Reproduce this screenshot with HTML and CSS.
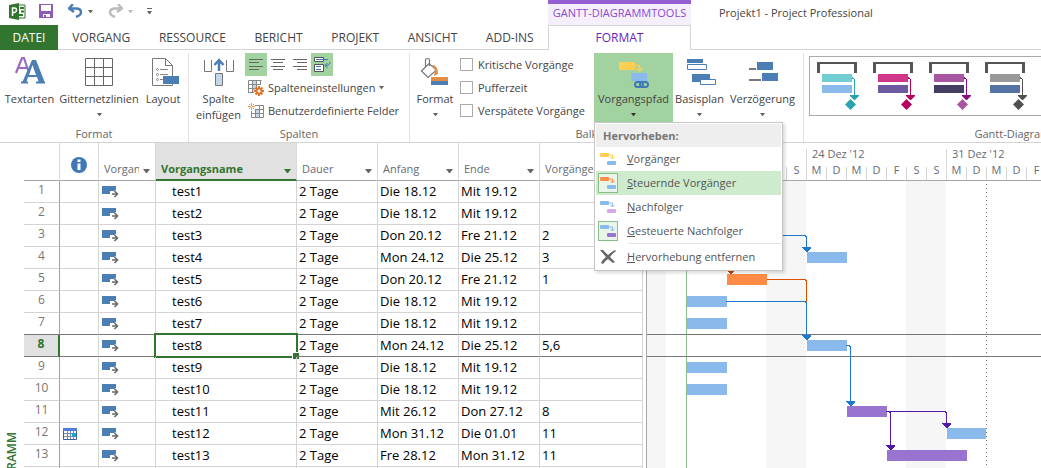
FILE: index.html
```html
<!DOCTYPE html>
<html lang="de">
<head>
<meta charset="utf-8">
<title>Projekt1 - Project Professional</title>
<link rel="stylesheet" href="styles.css">
</head>
<body>
<svg class="defs" aria-hidden="true">
  <symbol id="task-mode" viewBox="0 0 17 12">
    <path d="M0 0H14V5H8V8H0Z" fill="#4a7eb5"/>
    <path d="M10 8H15M12.500 5L15.500 8L12.500 11" fill="none" stroke="#fff" stroke-width="3"/>
    <path d="M10 8H15M12.500 5L15.500 8L12.500 11" fill="none" stroke="#6a6a6a" stroke-width="1.600"/>
  </symbol>
  <symbol id="caret" viewBox="0 0 7 4"><path d="M0 0H7L4 4H3Z"/></symbol>
</svg>

<header class="window-head">
  <div class="quick-access">
    <svg class="app-logo" width="17" height="17" viewBox="0 0 17 17">
      <path d="M9 2H16V15H9Z" fill="#fff" stroke="#31752f"/>
      <path d="M11 5H15M12 8.500H15M10 12H14" stroke="#31752f" stroke-width="2"/>
      <path d="M0 2L10 0V17L0 15Z" fill="#31752f"/>
      <path d="M3.500 13V5H5.500Q7.500 5 7.500 7T5.500 9.500H3.500" fill="none" stroke="#fff" stroke-width="1.500"/>
    </svg>
    <button class="tool save" aria-label="Speichern"><svg width="14" height="14" viewBox="0 0 14 14"><path d="M0 0H14V14H0Z" fill="#8e5bb8"/><path d="M2 1H12V7H2ZM4 10H11V13H7V11H5V13H4Z" fill="#fff"/></svg></button>
    <button class="tool undo" aria-label="Rückgängig"><svg width="15" height="14" viewBox="0 0 15 14"><path d="M5 0L1 4.500L6 8M2 4.500H8Q13 4.500 13 8.500Q13 11 8 13" fill="none" stroke="#4a7eb5" stroke-width="2.500"/></svg><svg class="caret" width="5" height="3"><use href="#caret"/></svg></button>
    <button class="tool redo" aria-label="Wiederholen"><svg width="15" height="14" viewBox="0 0 15 14"><path d="M10 0L14 4.500L9 8M13 4.500H7Q2 4.500 2 8.500Q2 11 7 13" fill="none" stroke="#bcbcbc" stroke-width="2.500"/></svg><svg class="caret" width="5" height="3"><use href="#caret"/></svg></button>
    <button class="tool" aria-label="Anpassen"><svg width="5" height="6" viewBox="0 0 5 6"><path d="M0 0H5V1H0ZM0 3H5L3 6H2Z" fill="#666"/></svg></button>
  </div>
  <div class="context-title">GANTT-DIAGRAMMTOOLS</div>
  <div class="window-title">Projekt1 - Project Professional</div>
  <nav class="tabs">
    <button class="tab file">DATEI</button>
    <button class="tab">VORGANG</button>
    <button class="tab">RESSOURCE</button>
    <button class="tab">BERICHT</button>
    <button class="tab">PROJEKT</button>
    <button class="tab">ANSICHT</button>
    <button class="tab">ADD-INS</button>
  </nav>
  <button class="tab format">FORMAT</button>
  <div class="tab-rest"></div>
</header>

<section class="ribbon">
  <div class="group g-format">
    <div class="tools">
      <button class="big w-text"><svg width="32" height="32" viewBox="0 0 32 32"><path d="M2 17L8 2H10L15 17M4 12H13" fill="none" stroke="#9b6bbf" stroke-width="2.200"/><path d="M19 4H22L31 27H25L23 21H14L12 27H8L18 4ZM15 19H22L18.500 9Z" fill="#4a7eb5"/><path d="M7 26.500H14M22 26.500H31" stroke="#4a7eb5" stroke-width="2"/></svg><span>Textarten</span></button>
      <button class="big w-grid"><svg width="32" height="32" viewBox="0 0 32 32"><path d="M2.500 2.500H29.500V29.500H2.500ZM11.500 2V30M20.500 2V30M2 11.500H30M2 20.500H30" fill="none" stroke="#666"/></svg><span>Gitternetzlinien</span><svg class="caret" width="5" height="3"><use href="#caret"/></svg></button>
      <button class="big w-layout"><svg width="32" height="32" viewBox="0 0 32 32"><path d="M5.500 2.500H18.500L25.500 9.500V29.500H5.500ZM18.500 2.500V9.500H25.500" fill="#fff" stroke="#777"/><path d="M13 13.500H21M13 18.500H21M13 23.500H16" stroke="#888"/><g fill="#fff" stroke="#888"><circle cx="10.500" cy="13.500" r="1"/><circle cx="10.500" cy="18.500" r="1"/><circle cx="10.500" cy="23.500" r="1"/></g><path d="M16 20H32V28H16Z" fill="#4a7eb5"/></svg><span>Layout</span></button>
    </div>
    <div class="label">Format</div>
  </div>

  <div class="group g-columns">
    <div class="tools">
      <button class="big w-insert"><svg width="32" height="32" viewBox="0 0 32 32"><path d="M1.500 4V15.500H8.500V4M23.500 4V15.500H30.500V4" fill="none" stroke="#777"/><path d="M12.500 17.500H19.500V29.500H12.500Z" fill="#c3d6ea" stroke="#777"/><path d="M16 15V5M11.500 9L16 4L20.500 9" fill="none" stroke="#4a7eb5" stroke-width="2.500"/></svg><span>Spalte<br>einfügen</span></button>
      <div class="stack">
        <div class="aligns">
          <button class="align on" aria-label="Linksbündig"><svg width="14" height="11"><path d="M0 .5H14M0 3.500H10M0 7.500H14M0 10.500H10" stroke="#666"/></svg></button>
          <button class="align" aria-label="Zentriert"><svg width="14" height="11"><path d="M0 .5H14M2 3.500H12M0 7.500H14M2 10.500H12" stroke="#666"/></svg></button>
          <button class="align" aria-label="Rechtsbündig"><svg width="14" height="11"><path d="M0 .5H14M4 3.500H14M0 7.500H14M4 10.500H14" stroke="#666"/></svg></button>
          <button class="align on" aria-label="Text umbrechen"><svg width="17" height="17" viewBox="0 0 17 17"><path d="M.5 1.500H9.500V5.500H.5ZM.5 8.500H9.500V15.500H.5Z" fill="#fff" stroke="#555"/><path d="M2 3.500H14M2 10.500H7M2 13.500H7M16 6Q16 9.500 11 9.500M13.500 7L11 9.500L13.500 12" fill="none" stroke="#3d74b2"/></svg></button>
        </div>
        <button class="row-tool"><svg width="16" height="16" viewBox="0 0 16 16"><path d="M4 1H8V12H4Z" fill="#c3d6ea"/><path d="M.5 .5H13.500M.5 4.500H13M.5 8.500H8M.5 12.500H6M.5 .5V13M4.500 .5V13M8.500 .5V8M12.500 .5V5" fill="none" stroke="#888"/><circle cx="11" cy="11" r="2.500" fill="none" stroke="#e07628" stroke-width="2"/><path d="M11 6V8M11 14V16M6 11H8M14 11H16M7.500 7.500L9 9M13 13L14.500 14.500M14.500 7.500L13 9M7.500 14.500L9 13" stroke="#e07628" stroke-width="2"/></svg><span>Spalteneinstellungen</span><svg class="caret" width="5" height="3"><use href="#caret"/></svg></button>
        <button class="row-tool"><svg width="16" height="16" viewBox="0 0 16 16"><path d="M7 7H11V14H7Z" fill="#c3d6ea"/><path d="M7 2.500H15.500V14.500H3.500V8M7 6.500H15M4 10.500H15M7.500 7V14M11.500 2V14" fill="none" stroke="#888"/><path d="M3.500 0V2M3.500 5V7M0 3.500H2M5 3.500H7M1 1L2 2M5 5L6 6M6 1L5 2M2 5L1 6" stroke="#e8954a"/><circle cx="3.500" cy="3.500" r="1" fill="none" stroke="#e8954a"/></svg><span>Benutzerdefinierte Felder</span></button>
      </div>
    </div>
    <div class="label">Spalten</div>
  </div>

  <div class="group g-bars">
    <div class="tools">
      <button class="big w-fmt"><svg width="32" height="32" viewBox="0 0 32 32"><path d="M2.500 15L10 7.500L17.500 14L9 21.500ZM6.500 11V4Q6.500 2.500 8.500 2.500T10.500 4V10" fill="none" stroke="#777" stroke-width="1.200"/><path d="M13 9Q19 9 19 18L15 20L16 14Z" fill="#e58e46"/><path d="M12 21H29V25H12Z" fill="#e58e46"/><path d="M12 25H29V29H12Z" fill="#4a7eb5"/></svg><span>Format</span><svg class="caret" width="5" height="3"><use href="#caret"/></svg></button>
      <div class="checks">
        <label class="check"><input type="checkbox">Kritische Vorgänge</label>
        <label class="check"><input type="checkbox">Pufferzeit</label>
        <label class="check"><input type="checkbox">Verspätete Vorgänge</label>
      </div>
      <div class="dropdown">
        <button class="big w-path" aria-expanded="true"><svg width="32" height="32" viewBox="0 0 32 32"><path d="M1 6H17V14H1Z" fill="#ffcf54"/><path d="M17 9.500H21.500V13M18.500 12L21.500 15L24.500 12" fill="none" stroke="#ffcf54" stroke-width="1.500"/><path d="M13 17H29V25H13Z" fill="#8abaec"/><g fill="none" stroke="#4079b5" stroke-width="2"><rect x="17" y="26" width="8" height="5" rx="2.500"/><rect x="22" y="26" width="8" height="5" rx="2.500"/></g></svg><span>Vorgangspfad</span><svg class="caret" width="5" height="3"><use href="#caret"/></svg></button>
        <div class="menu" role="menu">
          <div class="menu-title">Hervorheben:</div>
          <button class="item" role="menuitem"><span class="mark"><svg width="16" height="12" viewBox="0 0 16 12"><rect width="9" height="4" rx="1" fill="#ffcf54"/><path d="M9 2H12.500V5M10.500 4L12.500 6L14.500 4" fill="none" stroke="#ffcf54"/><rect x="7" y="8" width="9" height="4" rx="1" fill="#8abaec"/></svg></span><span><u>V</u>orgänger</span></button>
          <button class="item hover" role="menuitem"><span class="mark set"><svg width="16" height="12" viewBox="0 0 16 12"><rect width="9" height="4" rx="1" fill="#ff8c46"/><path d="M9 2H12.500V5M10.500 4L12.500 6L14.500 4" fill="none" stroke="#ff8c46"/><rect x="7" y="8" width="9" height="4" rx="1" fill="#8abaec"/></svg></span><span><u>S</u>teuernde Vorgänger</span></button>
          <button class="item" role="menuitem"><span class="mark"><svg width="16" height="12" viewBox="0 0 16 12"><rect width="9" height="4" rx="1" fill="#8abaec"/><path d="M9 2H12.500V5M10.500 4L12.500 6L14.500 4" fill="none" stroke="#8abaec"/><rect x="7" y="8" width="9" height="4" rx="1" fill="#d8a8e8"/></svg></span><span><u>N</u>achfolger</span></button>
          <button class="item" role="menuitem"><span class="mark set"><svg width="16" height="12" viewBox="0 0 16 12"><rect width="9" height="4" rx="1" fill="#8abaec"/><path d="M9 2H12.500V5M10.500 4L12.500 6L14.500 4" fill="none" stroke="#8abaec"/><rect x="7" y="8" width="9" height="4" rx="1" fill="#9873d0"/></svg></span><span><u>G</u>esteuerte Nachfolger</span></button>
          <hr class="menu-rule">
          <button class="item" role="menuitem"><span class="mark"><svg width="16" height="14" viewBox="0 0 16 14"><path d="M0 0H3L8 5Q11 2 15 0L16 1Q12 4 10 7L15 12L13 13L8 9Q5 11 3 14L1 13Q3 9 6 7Z" fill="#666"/></svg></span><span><u>H</u>ervorhebung entfernen</span></button>
        </div>
      </div>
      <button class="big w-base"><svg width="32" height="32" viewBox="0 0 32 32"><path d="M3 3H19V7H3ZM8 18H26V26H8Z" fill="#4a7eb5"/><path d="M3.500 8.500H22.500V13.500H3.500ZM16.500 23.500H31.500V28.500H16.500Z" fill="#fff" stroke="#4a7eb5"/></svg><span>Basisplan</span><svg class="caret" width="5" height="3"><use href="#caret"/></svg></button>
      <button class="big w-delay"><svg width="32" height="32" viewBox="0 0 32 32"><path d="M10 6H26V14H10ZM15 17H31V25H15Z" fill="#4a7eb5"/><path d="M2 13H9M2 24H14" stroke="#777" stroke-width="2"/></svg><span>Verzögerung</span><svg class="caret" width="5" height="3"><use href="#caret"/></svg></button>
    </div>
    <div class="label">Balkenarten</div>
  </div>

  <div class="group g-gallery">
    <div class="gallery-inner">
      <div class="gallery">
        <button class="style s1" aria-label="Format 1"><svg width="56" height="58" viewBox="0 0 56 58"><path class="frame" d="M7 5H47V16H44V7H10V16H7Z"/><path class="top" d="M12 17H42V25H12Z"/><path class="bot" d="M12 28H42V36H12Z"/><path class="link" d="M42 20H43V21H44V22H45V38H49V39L45 43H44L40 39V38H44V22H42Z"/><path class="gem" d="M40.500 42L46 47.500L40.500 53L35 47.500Z"/></svg></button>
        <button class="style s2" aria-label="Format 2"><svg width="56" height="58" viewBox="0 0 56 58"><path class="frame" d="M7 5H47V16H44V7H10V16H7Z"/><path class="top" d="M12 17H42V25H12Z"/><path class="bot" d="M12 28H42V36H12Z"/><path class="link" d="M42 20H43V21H44V22H45V38H49V39L45 43H44L40 39V38H44V22H42Z"/><path class="gem" d="M40.500 42L46 47.500L40.500 53L35 47.500Z"/></svg></button>
        <button class="style s3" aria-label="Format 3"><svg width="56" height="58" viewBox="0 0 56 58"><path class="frame" d="M7 5H47V16H44V7H10V16H7Z"/><path class="top" d="M12 17H42V25H12Z"/><path class="bot" d="M12 28H42V36H12Z"/><path class="link" d="M42 20H43V21H44V22H45V38H49V39L45 43H44L40 39V38H44V22H42Z"/><path class="gem" d="M40.500 42L46 47.500L40.500 53L35 47.500Z"/></svg></button>
        <button class="style s4" aria-label="Format 4"><svg width="56" height="58" viewBox="0 0 56 58"><path class="frame" d="M7 5H47V16H44V7H10V16H7Z"/><path class="top" d="M12 17H42V25H12Z"/><path class="bot" d="M12 28H42V36H12Z"/><path class="link" d="M42 20H43V21H44V22H45V38H49V39L45 43H44L40 39V38H44V22H42Z"/><path class="gem" d="M40.500 42L46 47.500L40.500 53L35 47.500Z"/></svg></button>
      </div>
      <div class="label">Gantt-Diagrammformat</div>
    </div>
  </div>
</section>

<main class="workspace">
  <aside class="view-name"><span>GANTT-DIAGRAMM</span></aside>
  <table class="sheet">
    <colgroup><col class="c-num"><col class="c-info"><col class="c-mode"><col class="c-name"><col class="c-date"><col class="c-date"><col class="c-date"><col class="c-pred"></colgroup>
    <thead>
      <tr>
        <th class="num"></th>
        <th class="info"><svg width="16" height="16" viewBox="0 0 16 16"><circle cx="8" cy="8" r="8" fill="#3f78b5"/><path d="M8 2.500V5M8 6.500V13" stroke="#fff" stroke-width="3"/></svg></th>
        <th><div class="head"><span>Vorgangsmodus</span><svg class="caret" width="7" height="4"><use href="#caret"/></svg></div></th>
        <th class="picked"><div class="head"><span>Vorgangsname</span><svg class="caret" width="7" height="4"><use href="#caret"/></svg></div></th>
        <th><div class="head"><span>Dauer</span><svg class="caret" width="7" height="4"><use href="#caret"/></svg></div></th>
        <th><div class="head"><span>Anfang</span><svg class="caret" width="7" height="4"><use href="#caret"/></svg></div></th>
        <th><div class="head"><span>Ende</span><svg class="caret" width="7" height="4"><use href="#caret"/></svg></div></th>
        <th><div class="head"><span>Vorgänger</span><svg class="caret" width="7" height="4"><use href="#caret"/></svg></div></th>
      </tr>
    </thead>
    <tbody id="rows"></tbody>
  </table>
  <section class="chart">
    <div class="scale" id="scale"></div>
    <svg class="canvas" height="308" shape-rendering="crispEdges">
      <path d="M0 0H19V308H0ZM119 0H159V308H119ZM259 0H299V308H259Z" fill="#f6f6f6"/>
      <path d="M39.500 0V308" stroke="#8cc08c"/>
      <path d="M339.500 3V308" stroke="#777" stroke-dasharray="1 3"/>
      <path d="M0 153.500H2000M0 175.500H2000" stroke="#777"/>
      <g fill="#8abaec">
        <rect x="160" y="71" width="40" height="11"/>
        <rect x="40" y="115" width="40" height="11"/>
        <rect x="40" y="137" width="40" height="11"/>
        <rect x="160" y="159" width="40" height="11"/>
        <rect x="40" y="181" width="40" height="11"/>
        <rect x="40" y="203" width="40" height="11"/>
        <rect x="300" y="247" width="39" height="11"/>
      </g>
      <rect x="80" y="93" width="40" height="11" fill="#ff8c46"/>
      <g fill="#9873d0">
        <rect x="200" y="225" width="40" height="11"/>
        <rect x="240" y="269" width="80" height="11"/>
      </g>
      <g fill="none" stroke="#1f78d1">
        <path d="M80 54.500H158L159.500 56V67M79 120.500H158L159.500 122V155M199 164.500H202L203.500 166V221"/>
      </g>
      <path d="M120 98.500H158L159.500 100V121M83.500 60V89" fill="none" stroke="#e04f00"/>
      <path d="M239 230.500H298L299.500 232V243M242 230.500L243.500 232V265" fill="none" stroke="#5418a8"/>
      <path d="M155 66H164V67L160 71H159L155 67ZM155 154H164V155L160 159H159L155 155ZM199 220H208V221L204 225H203L199 221Z" fill="#1f78d1"/>
      <path d="M79 88H88V89L84 93H83L79 89Z" fill="#c84600"/>
      <path d="M295 242H304V243L300 247H299L295 243ZM239 264H248V265L244 269H243L239 265Z" fill="#5418a8"/>
    </svg>
  </section>
</main>
<script src="app.js"></script>
</body>
</html>
```

FILE: styles.css
```css
* { box-sizing: border-box; }

body {
  margin: 0;
  height: 100vh;
  overflow: hidden;
  display: flex;
  flex-direction: column;
  background: #fff;
  color: #444;
  font-family: "Open Sans", "Noto Sans", sans-serif;
  font-size: 11px;
  line-height: 16px;
}

button {
  margin: 0;
  padding: 0;
  border: 0;
  background: none;
  color: inherit;
  font: inherit;
  white-space: nowrap;
}

svg { display: block; flex: none; }
.defs { position: absolute; width: 0; height: 0; }
.caret { fill: #666; }

/* Title bar and tabs */
.window-head {
  flex: none;
  display: grid;
  grid-template-columns: 548px 143px 1fr;
  grid-template-rows: 25px 25px;
}
.quick-access { display: flex; align-items: center; padding: 0 0 3px 9px; }
.app-logo { margin-right: 13px; }
.tool { display: flex; align-items: center; gap: 5px; }
.save { margin-right: 15px; }
.undo { margin-right: 15px; }
.redo { margin-right: 14px; }
.redo .caret { fill: #bcbcbc; }
.context-title {
  border-top: 4px solid #9560d3;
  background: #f5effc;
  color: #8a4bd0;
  text-align: center;
  line-height: 18px;
  white-space: nowrap;
}
.window-title { padding: 5px 0 0 28px; white-space: nowrap; }
.tabs { display: flex; border-bottom: 1px solid #d4d4d4; }
.tab { flex: 1 1 auto; height: 25px; font-size: 12px; text-align: center; }
.file { flex: 0 0 58px; background: #31752f; color: #fff; }
.format { border: 1px solid #d4d4d4; border-bottom: 0; color: #6a1fb8; }
.tab-rest { border-bottom: 1px solid #d4d4d4; }

/* Ribbon */
.ribbon {
  flex: none;
  display: flex;
  height: 93px;
  padding-top: 3px;
  border-bottom: 1px solid #d4d4d4;
}
.group { position: relative; display: flex; flex-direction: column; flex: none; }
.group + .group { border-left: 1px solid #e1e1e1; }
.g-format { width: 188px; }
.g-columns { width: 221px; }
.g-bars { width: 394px; }
.g-gallery { flex: 1; overflow: hidden; }
.gallery-inner { width: 462px; }
.tools { display: flex; height: 69px; }
.label { color: #666; text-align: center; line-height: 24px; }
.big {
  display: flex;
  flex-direction: column;
  align-items: center;
  padding-top: 3px;
  height: 69px;
}
.big span { line-height: 16px; }
.big .caret { margin-top: 6px; }
.big > svg:first-child { margin-bottom: 3px; }
.w-text { width: 59px; }
.w-grid { width: 80px; }
.w-layout { width: 48px; }
.w-insert { width: 56px; padding-left: 3px; }
.w-fmt { width: 50px; }
.w-path { width: 79px; background: #a3d2a1; }
.w-path .caret { fill: #333; }
.w-base { width: 53px; }
.w-delay { width: 73px; }
.stack { display: flex; flex-direction: column; }
.aligns { display: flex; }
.align { width: 22px; height: 23px; display: grid; place-items: center; }
.on { background: #a3d2a1; }
.row-tool { display: flex; align-items: center; gap: 4px; height: 23px; padding-left: 3px; }
.checks { width: 134px; display: flex; flex-direction: column; }
.check { display: flex; align-items: center; gap: 5px; height: 23px; white-space: nowrap; }
.check input {
  appearance: none;
  width: 13px;
  height: 13px;
  margin: 0;
  flex: none;
  border: 1px solid #ababab;
  background: #fff;
}

/* Menu */
.dropdown { position: relative; }
.menu {
  position: absolute;
  z-index: 2;
  top: 100%;
  left: 0;
  width: 189px;
  padding: 1px;
  border: 1px solid #c6c6c6;
  background: #fff;
  box-shadow: 2px 2px 3px rgba(0, 0, 0, .15);
}
.menu-title {
  height: 23px;
  padding-left: 7px;
  background: #eee;
  color: #777;
  font-weight: bold;
  line-height: 23px;
}
.item { display: flex; align-items: center; width: 100%; height: 24px; padding-left: 2px; gap: 9px; color: #555; }
.hover { background: #ceebce; }
.mark { width: 20px; height: 20px; display: grid; place-items: center; }
.set { border: 1px solid #88bd88; background: #e9f5e9; }
.menu-rule { margin: 0 0 1px 32px; border: 0; border-top: 1px solid #e1e1e1; }

/* Style gallery */
.gallery { display: flex; width: 450px; height: 60px; margin: 3px 5px 6px; border: 1px solid #ababab; }
.style { color: #2ba3af; }
.frame { fill: #555; }
.gem, .link { fill: currentColor; }
.s1 .top { fill: #73ced4; }
.s1 .bot { fill: #8abaec; }
.s2 { color: #b4005f; }
.s2 .top { fill: #d03689; }
.s2 .bot { fill: #6e5a9e; }
.s3 { color: #a855a2; }
.s3 .link { fill: #8a0a80; }
.s3 .top { fill: #a855a2; }
.s3 .bot { fill: #423f63; }
.s4 { color: #505050; }
.s4 .top { fill: #999; }
.s4 .bot { fill: #5673a5; }

/* Workspace */
.workspace { flex: 1; min-height: 0; display: flex; overflow: hidden; }
.view-name { flex: none; width: 24px; padding: 289px 0 0 4px; }
.view-name span {
  display: block;
  writing-mode: vertical-rl;
  transform: rotate(180deg);
  color: #31752f;
  font-size: 12px;
  font-weight: 600;
  line-height: 16px;
  white-space: nowrap;
}
.sheet {
  flex: none;
  width: 619px;
  height: 346px;
  table-layout: fixed;
  border-collapse: separate;
  border-spacing: 0;
  color: #000;
}
.c-num { width: 36px; }
.c-info { width: 39px; }
.c-mode { width: 57px; }
.c-name { width: 141px; }
.c-date { width: 81px; }
.c-pred { width: 103px; }
.sheet th {
  height: 38px;
  padding: 0;
  border-right: 1px solid #d9d9d9;
  border-bottom: 1px solid #a8a8a8;
  color: #666b75;
  font-weight: normal;
  text-align: left;
  vertical-align: bottom;
}
.sheet .info { padding: 0 0 7px 11px; }
.head { display: flex; align-items: center; gap: 4px; height: 22px; padding: 0 5px 0 5px; }
.head span { flex: 1; min-width: 0; overflow: hidden; white-space: nowrap; }
.head .caret { margin-top: 4px; }
.sheet .picked { background: #e1e1e1; border-bottom: 2px solid #31752f; color: #31752f; font-weight: bold; }
.picked .head { height: 20px; }
.picked .caret { fill: #31752f; }
.sheet td {
  position: relative;
  height: 22px;
  padding: 0 0 2px 2px;
  border-right: 1px solid #d4d4d4;
  border-bottom: 1px solid #d4d4d4;
  font-size: 13px;
  line-height: 18px;
  white-space: nowrap;
}
.sheet .num {
  padding: 0;
  border-right-color: #a0a0a0;
  color: #777;
  font-size: 12px;
  text-align: center;
  vertical-align: top;
}
.sheet thead .num { border-right-color: #d9d9d9; }
.sheet .name { padding-left: 16px; }
.sheet .mode { padding: 1px 0 0 3px; }
.sheet .note { padding: 0 0 0 3px; }
.before td, .current td { border-bottom-color: #777; }
.sheet .current .num { background: #e1e1e1; border-right: 2px solid #31752f; color: #31752f; font-weight: bold; }
.cursor { position: absolute; inset: -2px; border: 2px solid #31752f; }
.cursor::after {
  content: "";
  position: absolute;
  right: -3px;
  bottom: -3px;
  width: 6px;
  height: 6px;
  border: solid #fff;
  border-width: 1px 0 0 1px;
  background: #31752f;
}

/* Chart */
.chart { flex: 1; min-width: 0; margin-left: 3px; border-left: 1px solid #a8a8a8; overflow: hidden; }
.scale { display: flex; height: 38px; border-bottom: 1px solid #a8a8a8; color: #666b75; }
.week { flex: none; border-right: 1px solid #d9d9d9; margin-top: 6px; }
.week-label { height: 15px; padding-left: 5px; white-space: nowrap; line-height: 10px; }
.days { display: flex; height: 16px; }
.day { width: 20px; height: 13px; margin-top: 3px; border-right: 1px solid #d4d4d4; text-align: center; line-height: 6px; }
.day:last-child { width: 19px; border-right: 0; }
.canvas { width: 100%; }
```

FILE: app.js
```js
const tasks = [
  ["Die 18.12", "Mit 19.12", ""],
  ["Die 18.12", "Mit 19.12", ""],
  ["Don 20.12", "Fre 21.12", "2"],
  ["Mon 24.12", "Die 25.12", "3"],
  ["Don 20.12", "Fre 21.12", "1"],
  ["Die 18.12", "Mit 19.12", ""],
  ["Die 18.12", "Mit 19.12", ""],
  ["Mon 24.12", "Die 25.12", "5,6"],
  ["Die 18.12", "Mit 19.12", ""],
  ["Die 18.12", "Mit 19.12", ""],
  ["Mit 26.12", "Don 27.12", "8"],
  ["Mon 31.12", "Die 01.01", "11"],
  ["Fre 28.12", "Mon 31.12", "11"]
];
const calendar = '<svg width="14" height="12" viewBox="0 0 14 12"><path d="M.5 .5H13.500V11.500H.5Z" fill="#fff" stroke="#3d5f9a"/><path d="M0 0H14V3H0Z" fill="#4f7fd6"/><path d="M1 5.500H13M1 8.500H13M4.500 3V11M7.500 3V11M10.500 3V11" stroke="#7a8aa5"/><path d="M9 5H13V9H9Z" fill="#20a0d8"/></svg>';
const mode = '<svg width="17" height="12"><use href="#task-mode"/></svg>';
const current = 8;

document.getElementById("rows").innerHTML = tasks.map(([start, end, pred], i) => {
  const n = i + 1;
  const state = n === current ? "current" : n === current - 1 ? "before" : "";
  return `<tr class="${state}"><td class="num">${n}</td><td class="note">${n === 12 ? calendar : ""}</td>` +
    `<td class="mode">${mode}</td><td class="name">test${n}${n === current ? '<div class="cursor"></div>' : ""}</td>` +
    `<td>2 Tage</td><td>${start}</td><td>${end}</td><td>${pred}</td></tr>`;
}).join("") + `<tr>${'<td class="num"></td>'}${"<td></td>".repeat(7)}</tr>`;

const weeks = [["", "S"], ["17 Dez '12", "MDMDFSS"], ["24 Dez '12", "MDMDFSS"], ["31 Dez '12", "MDMDFSS"]];
document.getElementById("scale").innerHTML = weeks.map(([label, days]) =>
  `<div class="week"><div class="week-label">${label}</div><div class="days">` +
  [...days].map(d => `<div class="day">${d}</div>`).join("") + "</div></div>"
).join("");
```
